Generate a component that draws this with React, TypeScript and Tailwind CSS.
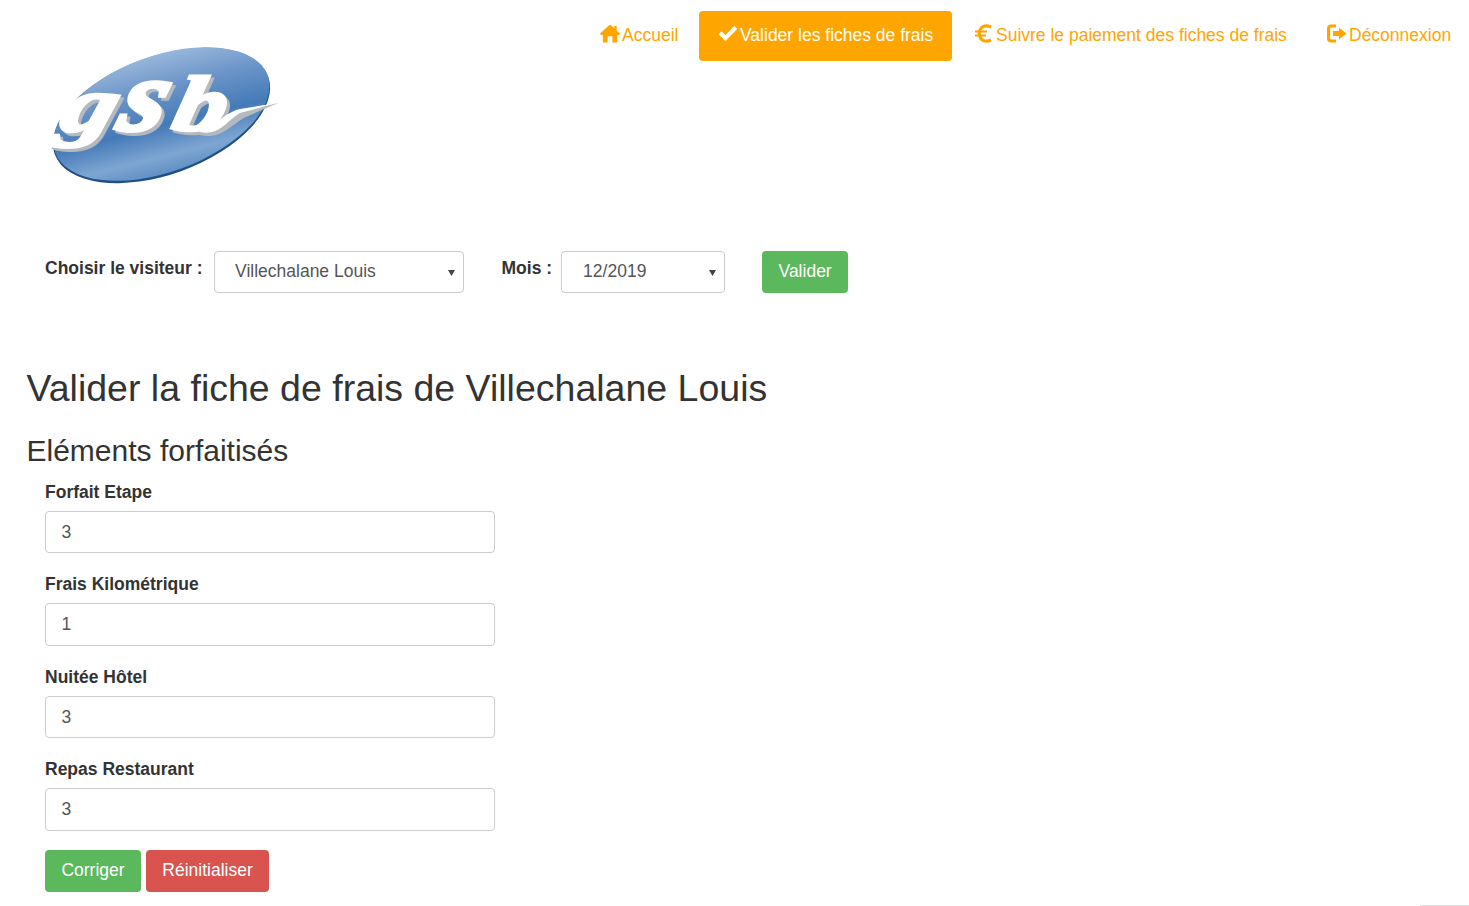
const font = "font-['Liberation_Sans',Arial,sans-serif]";

function Home() {
  return (
    <svg width="20" height="19" viewBox="0 0 21 19" className="mb-[4px] shrink-0" fill="#ffa500">
      <path fillRule="evenodd" d="M10.5 0 L15 4 V1.5 H17.5 V6.3 L21 9.6 L20 11 H18 V19 H13 V12.5 H8 V19 H3 V11 H1 L0 9.6 Z" />
    </svg>
  );
}
function Check() {
  return (
    <svg width="20" height="15" viewBox="0 0 19 15" className="mb-[4px] shrink-0" fill="#ffffff">
      <path d="M0 8.2 L3 5.2 L7 9 L15.8 0 L18.8 3 L7 15 Z" />
    </svg>
  );
}
function Euro() {
  return (
    <svg width="17" height="19" viewBox="0 0 17 19" className="mb-[4px] mr-[2px] shrink-0" fill="none" stroke="#ffa500">
      <path d="M16 3 C10 0.2 4.6 2.5 4.4 9.5 C4.6 16.5 10 18.8 16 16" strokeWidth="3.2" />
      <path d="M0 7.5 H12 M0 11.5 H11" strokeWidth="2.2" />
    </svg>
  );
}
function LogOut() {
  return (
    <svg width="20" height="19" viewBox="0 0 20 19" className="mb-[4px] shrink-0" fill="none">
      <path d="M9 2 H4 Q1.6 2 1.6 4.4 V14.6 Q1.6 17 4 17 H9" stroke="#ffa500" strokeWidth="3.2" />
      <path d="M6 7 H12 V3.5 L19.5 9.5 L12 15.5 V12 H6 Z" fill="#ffa500" />
    </svg>
  );
}

function LogoLetters({ dx, dy, fill }: { dx: number; dy: number; fill: string }) {
  const common = {
    fontFamily: "'Liberation Serif', serif",
    fontStyle: "italic",
    fontWeight: 700,
    fontSize: 78,
    fill,
    stroke: fill,
    strokeWidth: 3,
  };
  return (
    <g transform={`translate(${dx} ${dy})`}>
      <text {...common} transform="translate(7 88) skewX(-16) scale(1.4 1)">g</text>
      <text {...common} transform="translate(65 87) skewX(-16) scale(1.5 1.3)">s</text>
      <text {...common} transform="translate(120 87) skewX(-12) scale(1.35 1)">b</text>
    </g>
  );
}

function Logo() {
  return (
    <svg width="232" height="144" viewBox="0 0 232 144" className="block overflow-visible">
      <defs>
        <linearGradient id="ovalFill" x1="0.62" y1="0" x2="0.42" y2="1">
          <stop offset="0" stopColor="#9ab8db" />
          <stop offset="0.3" stopColor="#6a94c8" />
          <stop offset="0.6" stopColor="#457ab9" />
          <stop offset="0.85" stopColor="#7ea6d2" />
          <stop offset="1" stopColor="#5f8fc4" />
        </linearGradient>
      </defs>
      <ellipse cx="111.5" cy="72.5" rx="113.6" ry="59" transform="rotate(-20 111.5 72.5)" fill="#1f4f85" />
      <ellipse cx="111.5" cy="71" rx="113" ry="58" transform="rotate(-20 111.5 71)" fill="url(#ovalFill)" />
      <LogoLetters dx={3} dy={3} fill="#b4b9bf" />
      <LogoLetters dx={0} dy={0} fill="#ffffff" />
      <path d="M150 92 C172 97 180 82 196 74 L228 60 L190 68 C176 72 168 84 150 89 Z" fill="#b4b9bf" />
      <path d="M150 89 C170 93 176 78 190 70 L227 60 L190 66 C174 70 168 82 150 86 Z" fill="#ffffff" />
    </svg>
  );
}

function NavItem({ icon, label, active = false, className = "" }: { icon: React.ReactNode; label: string; active?: boolean; className?: string }) {
  return (
    <a className={`flex h-[50px] items-center gap-[2px] rounded-[4px] pb-[2px] text-[17.5px] ${active ? "bg-[#ffa500] text-white" : "text-[#ffa500]"} ${className}`}>
      {icon}
      <span>{label}</span>
    </a>
  );
}

function SelectBox({ value, className }: { value: string; className: string }) {
  return (
    <div className={`flex h-[42px] items-center justify-between rounded-[4px] border border-[#cccccc] bg-white pr-[8px] text-[17.5px] text-[#555555] ${className}`}>
      <span className="pb-[2px]">{value}</span>
      <svg width="7" height="7" viewBox="0 0 7 7" fill="#444444"><path d="M0 1 H7 L3.5 7 Z" /></svg>
    </div>
  );
}

function Field({ label, value, className }: { label: string; value: string; className: string }) {
  return (
    <div className={`flex flex-col ${className}`}>
      <label className="text-[17.5px] font-bold leading-[25px] text-[#333333]">{label}</label>
      <div className="mt-[6px] flex h-[42.5px] w-[450px] items-center rounded-[4px] border border-[#cccccc] bg-white pl-[15.5px] text-[17.5px] text-[#555555]">{value}</div>
    </div>
  );
}

export default function App() {
  return (
    <div className={`relative h-[906px] overflow-hidden bg-white ${font}`}>
      <header className="flex h-[228px] items-start justify-between">
        <div className="ml-[50px] mt-[43px]"><Logo /></div>
        <nav className="mt-[11px] flex items-center">
          <NavItem icon={<Home />} label="Accueil" className="w-[118px] pl-[20px]" />
          <NavItem icon={<Check />} label="Valider les fiches de frais" active className="ml-[1px] w-[253px] pl-[19px]" />
          <NavItem icon={<Euro />} label="Suivre le paiement des fiches de frais" className="ml-[4px] w-[350px] pl-[19px]" />
          <NavItem icon={<LogOut />} label="Déconnexion" className="ml-[2px] w-[161px] pl-[19px]" />
        </nav>
      </header>

      <form className="ml-[45px] mt-[23px] flex items-start">
        <label className="mt-[4.5px] text-[17.5px] font-bold leading-[25px] text-[#333333]">Choisir le visiteur :</label>
        <SelectBox value="Villechalane Louis" className="ml-[11px] w-[250px] pl-[20.5px]" />
        <label className="ml-[38px] mt-[4.5px] text-[17.5px] font-bold leading-[25px] text-[#333333]">Mois :</label>
        <SelectBox value="12/2019" className="ml-[9px] w-[164px] pl-[21px]" />
        <button type="button" className="ml-[37px] h-[42px] w-[86px] rounded-[4px] bg-[#5cb85c] pb-[2px] text-[17.5px] text-white">Valider</button>
      </form>

      <h1 className="ml-[26.5px] mt-[75px] text-[37.5px] font-normal leading-[40px] text-[#333333]">Valider la fiche de frais de Villechalane Louis</h1>
      <h2 className="ml-[26.5px] mt-[26px] text-[30px] font-normal leading-[33px] text-[#333333]">Eléments forfaitisés</h2>

      <div className="ml-[45px] mt-[12.5px] flex flex-col">
        <Field label="Forfait Etape" value="3" className="" />
        <Field label="Frais Kilométrique" value="1" className="mt-[19px]" />
        <Field label="Nuitée Hôtel" value="3" className="mt-[19px]" />
        <Field label="Repas Restaurant" value="3" className="mt-[19px]" />
        <div className="mt-[19.5px] flex gap-[5px]">
          <button type="button" className="h-[42px] w-[96px] rounded-[4px] bg-[#5cb85c] pb-[2px] text-[17.5px] text-white">Corriger</button>
          <button type="button" className="h-[42px] w-[123px] rounded-[4px] bg-[#d9534f] pb-[2px] text-[17.5px] text-white">Réinitialiser</button>
        </div>
      </div>

      <div className="absolute bottom-0 right-0 h-px w-[49px] bg-[#dddddd]" />
    </div>
  );
}
